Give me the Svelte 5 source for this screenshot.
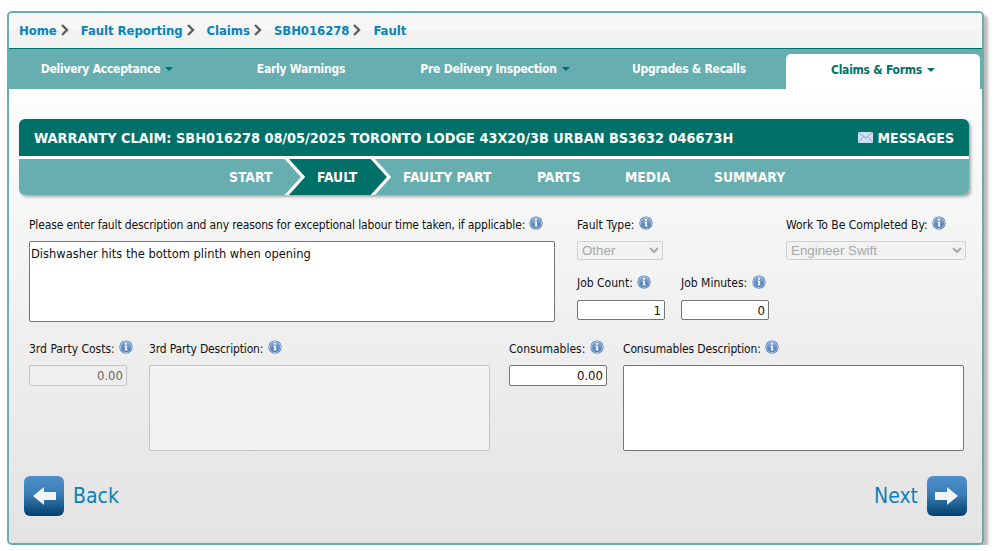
<script>
  const crumbs = ['Home', 'Fault Reporting', 'Claims', 'SBH016278', 'Fault'];
  const tabs = [
    { label: 'Delivery Acceptance', caret: true },
    { label: 'Early Warnings' },
    { label: 'Pre Delivery Inspection', caret: true },
    { label: 'Upgrades & Recalls' },
    { label: 'Claims & Forms', caret: true, active: true }
  ];
</script>

{#snippet info()}
  <svg class="info" viewBox="0 0 14 14" width="14" height="14" aria-hidden="true">
    <defs>
      <linearGradient id="ig" x1="0" y1="0" x2="0" y2="1">
        <stop offset="0" stop-color="#8fb2dc" />
        <stop offset="1" stop-color="#3f70ad" />
      </linearGradient>
    </defs>
    <circle cx="7" cy="7" r="6.6" fill="#3f6ea8" />
    <circle cx="7" cy="7" r="5.6" fill="url(#ig)" stroke="#c4d6ec" stroke-width="0.8" />
    <rect x="6.1" y="3" width="1.8" height="1.7" fill="#fff" />
    <path d="M5.5 5.8h2.4v3.6h.8v1h-3.2v-1h.8V6.8h-.8z" fill="#fff" />
  </svg>
{/snippet}

{#snippet chevron()}
  <svg class="chev" viewBox="0 0 8 12" width="8" height="12" aria-hidden="true">
    <path d="M1 1l5 5-5 5" fill="none" stroke="#5f5f5f" stroke-width="2.4" />
  </svg>
{/snippet}

{#snippet arrowBtn(dir)}
  <span class="abtn">
    <svg viewBox="0 0 40 40" width="40" height="40" aria-hidden="true">
      {#if dir === 'left'}
        <path class="arrow" d="M9 20l11-9v5h12v8H20v5z" />
      {:else}
        <path class="arrow" d="M31 20l-11-9v5H8v8h12v5z" />
      {/if}
    </svg>
  </span>
{/snippet}

<div class="panel">
  <div class="crumbs">
    {#each crumbs as c, i}
      <a class="crumb">{c}</a>
      {#if i < crumbs.length - 1}{@render chevron()}{/if}
    {/each}
  </div>

  <nav class="tabs">
    {#each tabs as t}
      <div class="tab" class:active={t.active}>
        <span>{t.label}</span>
        {#if t.caret}<i class="caret"></i>{/if}
      </div>
    {/each}
  </nav>

  <div class="body">
    <div class="head">
      <div class="title">
        <span class="ttext">WARRANTY CLAIM: SBH016278 08/05/2025 TORONTO LODGE 43X20/3B URBAN BS3632 046673H</span>
        <span class="msg">
          <svg viewBox="0 0 15 11" width="15" height="11" aria-hidden="true">
            <rect width="15" height="11" fill="#cfe0f4" />
            <path d="M0 0l7.500 6L15 0M0 11l5.500-6.500M15 11L9.500 4.500" fill="none" stroke="#8aa7c9" stroke-width="1" />
          </svg>
          MESSAGES
        </span>
      </div>
      <div class="steps">
        <svg class="chevrons" viewBox="0 0 400 36" width="400" height="36" aria-hidden="true">
          <path d="M266 0H352L370 18L352 36H266L284 18Z" fill="#017068" />
          <path d="M266 -2L284 18L266 38M352 -2L370 18L352 38" fill="none" stroke="#fff" stroke-width="3.200" />
        </svg>
        <span class="step s1w">START</span>
        <span class="step s2w">FAULT</span>
        <span class="step s3w">FAULTY PART</span>
        <span class="step s4w">PARTS</span>
        <span class="step s5w">MEDIA</span>
        <span class="step">SUMMARY</span>
      </div>
    </div>

    <div class="row1">
      <div class="f desc">
        <label class="tight">Please enter fault description and any reasons for exceptional labour time taken, if applicable: {@render info()}</label>
        <div class="ta big">Dishwasher hits the bottom plinth when opening</div>
      </div>
      <div class="mid">
        <div class="f">
          <label>Fault Type: {@render info()}</label>
          <select disabled class="s1"><option>Other</option></select>
        </div>
        <div class="jobs">
          <div class="f">
            <label>Job Count: {@render info()}</label>
            <input class="num" value="1" />
          </div>
          <div class="f">
            <label>Job Minutes: {@render info()}</label>
            <input class="num" value="0" />
          </div>
        </div>
      </div>
      <div class="f work">
        <label>Work To Be Completed By: {@render info()}</label>
        <select disabled class="s2"><option>Engineer Swift</option></select>
      </div>
    </div>

    <div class="row2">
      <div class="f c1">
        <label>3rd Party Costs: {@render info()}</label>
        <input class="num money" disabled value="0.00" />
      </div>
      <div class="f c2">
        <label class="tight">3rd Party Description: {@render info()}</label>
        <div class="ta tall off"></div>
      </div>
      <div class="f c3">
        <label>Consumables: {@render info()}</label>
        <input class="num money" value="0.00" />
      </div>
      <div class="f c4">
        <label class="tight">Consumables Description: {@render info()}</label>
        <div class="ta tall"></div>
      </div>
    </div>

    <div class="foot">
      <a class="navbtn">{@render arrowBtn('left')}<span>Back</span></a>
      <a class="navbtn"><span>Next</span>{@render arrowBtn('right')}</a>
    </div>
  </div>
</div>

<style>
  :global(body) {
    margin: 0;
    background: #fff;
  }
  .panel {
    box-sizing: border-box;
    width: 977px;
    height: 534px;
    margin: 11px 0 0 7px;
    border: 2px solid #66aeb0;
    border-radius: 5px;
    box-shadow: 4px 4px 3px #bdbdbd;
    font-family: "DejaVu Sans Condensed", "DejaVu Sans", sans-serif;
    font-stretch: condensed;
    overflow: hidden;
    display: flex;
    flex-direction: column;
    background: #fff;
  }
  .crumbs {
    height: 36px;
    flex: none;
    box-sizing: border-box;
    background: linear-gradient(#f7f7f7 50%, #f2f2f1 50%);
    border-bottom: 1px solid #00706a;
    display: flex;
    align-items: center;
    padding: 0 0 1px 10px;
    font-size: 13px;
    letter-spacing: -0.05px;
    font-weight: bold;
    color: #0a82bb;
  }
  .chev {
    margin: 0 12px 0 4px;
  }
  .tabs {
    height: 40px;
    flex: none;
    background: #66aeb0;
    display: flex;
    padding: 5px 0 0 1px;
    box-sizing: border-box;
  }
  .tab {
    width: 194px;
    display: flex;
    align-items: center;
    justify-content: center;
    gap: 5px;
    color: #fff;
    font-size: 12px;
    letter-spacing: -0.25px;
    font-weight: bold;
    padding-bottom: 5px;
    box-sizing: border-box;
  }
  .tab.active {
    background: #fff;
    color: #00706a;
    border-radius: 5px 5px 0 0;
    padding-bottom: 4px;
  }
  .caret {
    width: 0;
    height: 0;
    border: 4px solid transparent;
    border-top-color: #00706a;
    border-bottom: 0;
  }
  .body {
    flex: 1;
    padding: 30px 13px 0 10px;
    display: flex;
    flex-direction: column;
    min-height: 0;
    background: linear-gradient(#fdfdfd, #e3e3e3);
  }
  .head {
    flex: none;
    border-radius: 6px;
    box-shadow: 2px 2px 3px #aaa;
    overflow: hidden;
    background: #fff;
    height: 76px;
    box-sizing: border-box;
  }
  .title {
    height: 37px;
    background: #017068;
    color: #fff;
    font-weight: bold;
    font-size: 14px;
    display: flex;
    align-items: center;
    justify-content: space-between;
    padding: 0 15px;
  }
  .ttext {
    font-size: 14.370px;
  }
  .msg {
    display: flex;
    align-items: center;
    gap: 5px;
  }
  .steps {
    margin-top: 3px;
    height: 36px;
    background: #66aeb0;
    display: flex;
    align-items: center;
    color: #fff;
    font-weight: bold;
    font-size: 13.800px;
    padding-left: 210px;
    position: relative;
  }
  .chevrons {
    position: absolute;
    left: 0;
    top: 0;
  }
  .step {
    position: relative;
    flex: none;
    height: 36px;
    display: flex;
    align-items: center;
    box-sizing: border-box;
  }
  .s1w {
    width: 88px;
  }
  .s2w {
    width: 86px;
  }
  .s3w {
    width: 134px;
  }
  .s4w {
    width: 88px;
  }
  .s5w {
    width: 89px;
  }
  label {
    display: flex;
    flex: none;
    align-items: center;
    gap: 1px;
    height: 18px;
    box-sizing: border-box;
    padding-top: 2px;
    font-size: 12px;
    color: #111;
    white-space: pre;
  }
  .row2 label,
  .jobs label {
    padding-top: 0;
  }
  .tight {
    letter-spacing: -0.150px;
  }
  .info {
    margin-top: -5px;
    flex: none;
  }
  .jobs .info {
    margin-top: -3px;
  }
  .f {
    flex: none;
    display: flex;
    flex-direction: column;
    gap: 8px;
  }
  .row2 .f {
    gap: 7px;
  }
  .row1 {
    flex: none;
    display: flex;
    margin: 20px 0 0 10px;
    height: 108px;
  }
  .desc {
    width: 548px;
  }
  .ta {
    box-sizing: border-box;
    flex: none;
    background: #fff;
    border: 1px solid #767676;
    border-radius: 2px;
    font-size: 12.750px;
    padding: 4px 1px;
    color: #111;
  }
  .big {
    width: 526px;
    height: 81px;
  }
  .mid {
    flex: none;
    width: 209px;
    display: flex;
    flex-direction: column;
    gap: 14px;
  }
  .jobs {
    display: flex;
    gap: 16px;
  }
  select {
    box-sizing: border-box;
    height: 19px;
    font-family: "Liberation Sans", sans-serif;
    font-size: 13.333px;
    border-radius: 2px;
    border: 1px solid #d0d0d0;
    background: #f2f2f2;
    color: #a8a8a8;
    opacity: 1;
    padding: 0;
  }
  .s1 {
    width: 86px;
  }
  .s2 {
    width: 180px;
  }
  .num {
    box-sizing: border-box;
    width: 88px;
    height: 20px;
    text-align: right;
    border: 1px solid #767676;
    border-radius: 2px;
    font-family: "DejaVu Sans Condensed", "DejaVu Sans", sans-serif;
    font-size: 13px;
    padding: 0 3px;
    color: #111;
    background: #fff;
  }
  .money {
    width: 98px;
    height: 21px;
  }
  input:disabled {
    background: #efefef;
    border-color: #c4c4c4;
    color: #666;
  }
  .row2 {
    flex: none;
    display: flex;
    margin: 17px 0 0 10px;
    height: 111px;
  }
  .c1 {
    width: 120px;
  }
  .c2 {
    width: 360px;
  }
  .c3 {
    width: 114px;
  }
  .tall {
    width: 341px;
    height: 86px;
  }
  .off {
    background: #f2f2f2;
    border-color: #c4c4c4;
  }
  .foot {
    flex: none;
    display: flex;
    justify-content: space-between;
    margin: 25px 2px 0 5px;
  }
  .navbtn {
    display: flex;
    align-items: center;
    gap: 9px;
    font-family: "DejaVu Sans Condensed", "DejaVu Sans", sans-serif;
    font-size: 21px;
    color: #0a82bb;
  }
  .abtn {
    width: 40px;
    height: 40px;
    border-radius: 6px;
    background: linear-gradient(#4f90ca, #3b7db6 45%, #00406f);
    display: block;
  }
  .abtn svg {
    display: block;
  }
  .arrow {
    fill: #eef3f8;
    filter: blur(0.5px);
  }
</style>
